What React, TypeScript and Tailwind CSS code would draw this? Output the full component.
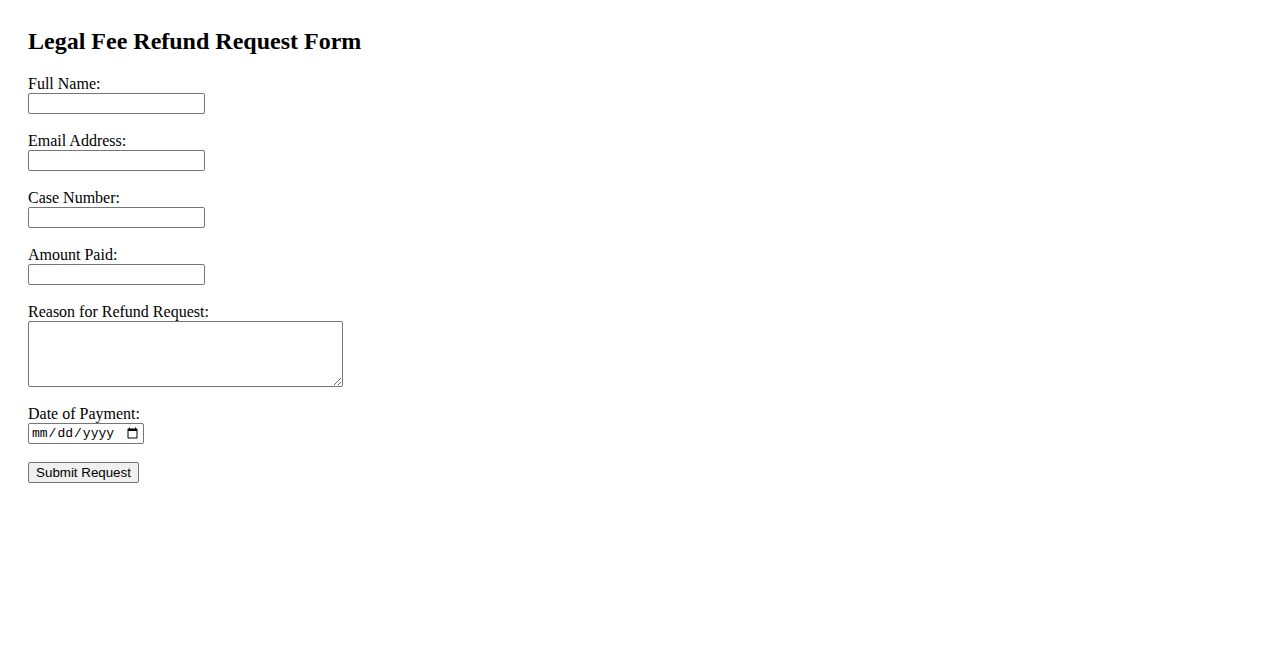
const fields = [
  { label: "Full Name:", type: "text" },
  { label: "Email Address:", type: "email" },
  { label: "Case Number:", type: "text" },
  { label: "Amount Paid:", type: "text" },
];

export default function App() {
  return (
    <div className="min-h-[650px] bg-white px-[28px] pt-[28px] font-['Liberation_Serif',serif] text-black">
      <h2 className="mb-[19px] h-[28px] text-[24px] font-bold leading-[26px]">
        Legal Fee Refund Request Form
      </h2>
      <form>
        {fields.map((f) => (
          <div key={f.label} className="mb-[18px]">
            <label className="block h-[18px] text-[16px] leading-[18px]">{f.label}</label>
            <input
              type={f.type}
              className="block h-[21px] w-[177px] rounded-[2px] border border-[#767676] bg-white px-[2px] text-[13px]"
            />
          </div>
        ))}
        <div className="mb-[18px]">
          <label className="block h-[18px] text-[16px] leading-[18px]">Reason for Refund Request:</label>
          <textarea className="block h-[66px] w-[315px] rounded-[2px] border border-[#767676] bg-white" />
        </div>
        <div className="mb-[18px]">
          <label className="block h-[18px] text-[16px] leading-[18px]">Date of Payment:</label>
          <input
            type="date"
            className="block h-[21px] w-[116px] rounded-[2px] border border-[#767676] bg-white px-[2px] font-['Liberation_Mono',monospace] text-[13px]"
          />
        </div>
        <button
          type="button"
          className="block h-[21px] w-[111px] rounded-[2px] border border-[#767676] bg-[#efefef] font-['Liberation_Sans',sans-serif] text-[13.33px] leading-none"
        >
          Submit Request
        </button>
      </form>
    </div>
  );
}
